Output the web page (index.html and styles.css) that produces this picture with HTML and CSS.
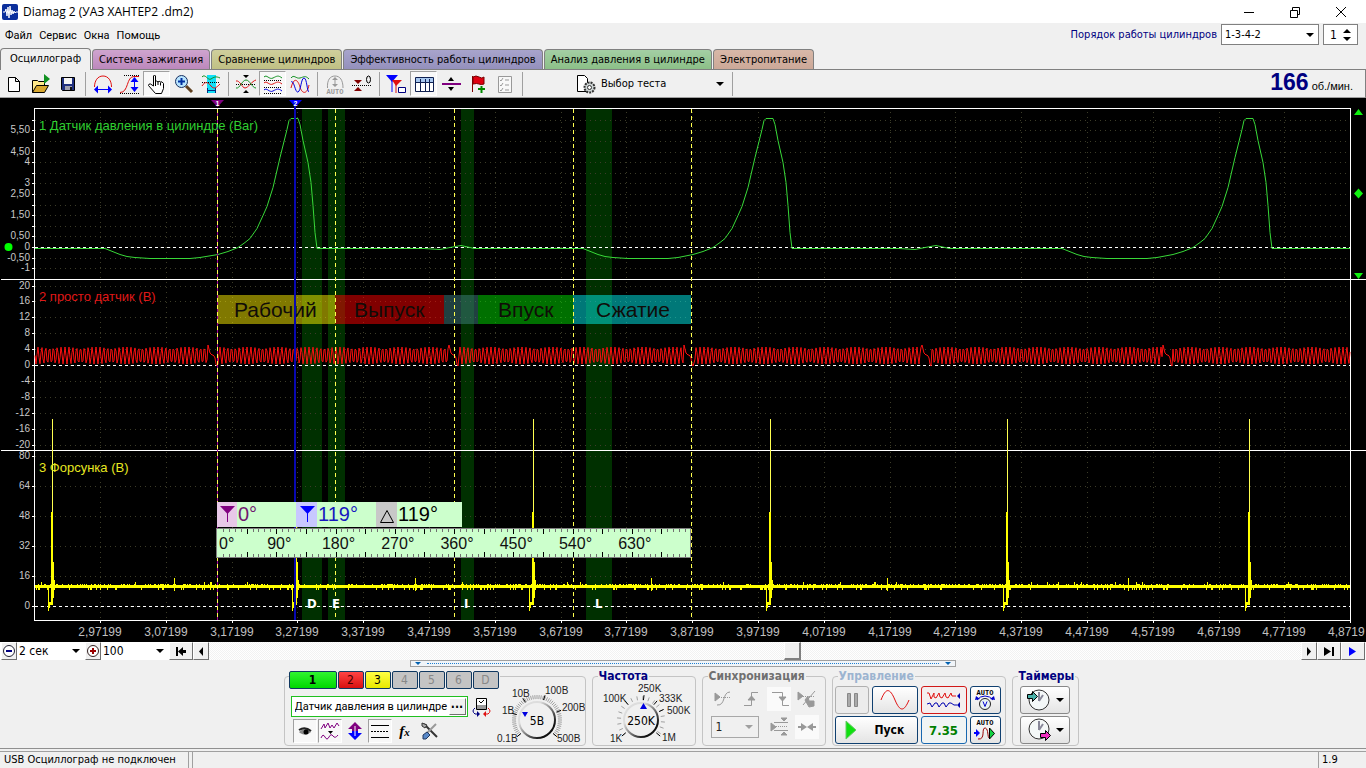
FILE: index.html
```html
<!DOCTYPE html>
<html lang="ru">
<head>
<meta charset="utf-8">
<title>Diamag 2 (УАЗ ХАНТЕР2 .dm2)</title>
<link rel="stylesheet" href="styles.css">
</head>
<body>
<header class="titlebar">
  <svg class="logo" width="16" height="16" viewBox="0 0 16 16"><rect width="16" height="16" rx="2" fill="#0b2f9c"/><path d="M1 8h2l1-3 1 7 1-9 1 11 1-12 1 9 1-5 1 4 1-3 1 2 1-1h2" fill="none" stroke="#fff"/></svg>
  <h1>Diamag 2 (УАЗ ХАНТЕР2 .dm2)</h1>
  <div class="window-buttons">
    <button aria-label="Свернуть"><svg width="12" height="12"><path d="M1 6.5h10" stroke="#000"/></svg></button>
    <button aria-label="Развернуть"><svg width="12" height="12" fill="none" stroke="#000"><path d="M1.5 4.500h7v7h-7zM3.500 4.500v-3h7v7h-2"/></svg></button>
    <button aria-label="Закрыть"><svg width="12" height="12"><path d="M1 1l10 10M11 1L1 11" stroke="#000"/></svg></button>
  </div>
</header>

<div class="menubar">
  <nav class="menu"><a href="#">Файл</a><a href="#">Сервис</a><a href="#">Окна</a><a href="#">Помощь</a></nav>
  <div class="order">
    <label for="order">Порядок работы цилиндров</label>
    <span class="combo order-combo"><select id="order"><option>1-3-4-2</option></select></span>
    <span class="spin"><input value="1" aria-label="Номер цилиндра"><svg width="10" height="14"><path d="M1 5h8L5 1zM1 9h8L5 13z"/></svg></span>
  </div>
</div>

<div class="tabs" role="tablist">
  <button role="tab" aria-selected="true" class="tab active">Осциллограф</button>
  <button role="tab" class="tab pink">Система зажигания</button>
  <button role="tab" class="tab olive">Сравнение цилиндров</button>
  <button role="tab" class="tab violet">Эффективность работы цилиндров</button>
  <button role="tab" class="tab green">Анализ давления в цилиндре</button>
  <button role="tab" class="tab peach">Электропитание</button>
</div>

<div class="toolbar">
  <button class="tool" aria-label="Новый"><svg width="22" height="22" viewBox="0 0 22 22"><path d="M5.500 4.500h7l4 4v10h-11zM12.500 4.500v4h4" fill="#fff" stroke="#000"/></svg></button>
  <button class="tool" aria-label="Открыть"><svg width="22" height="22" viewBox="0 0 22 22"><path d="M2.500 19.500v-12h5l1 1h6v4" fill="#ffe98a" stroke="#000"/><path d="M2.500 19.500l4-7h12l-4 7z" fill="#d8a830" stroke="#000"/><path d="M14 1l6 5-6 5z" fill="#109020"/></svg></button>
  <button class="tool" aria-label="Сохранить"><svg width="22" height="22" viewBox="0 0 22 22"><path d="M4.500 4.500h13v13h-12l-1-1z" fill="#203080" stroke="#000"/><path d="M7 5h8v6H7z" fill="#f4f4f4"/><path d="M8 13h7v4H8z" fill="#a0a0b0"/><path d="M13 14h2v3h-2z" fill="#111"/></svg></button>
  <i class="sep"></i>
  <button class="tool" aria-label="Масштаб по горизонтали"><svg width="22" height="22" viewBox="0 0 22 22" fill="none"><path d="M2.500 14c0-6 3-11 8.500-11s8.500 5 8.500 11" stroke="#e01010"/><path d="M5 16.500h12" stroke="#00f"/><path d="M2 16.500l4-4v8zM20 16.500l-4-4v8z" fill="#00f"/></svg></button>
  <button class="tool" aria-label="Масштаб по вертикали"><svg width="22" height="22" viewBox="0 0 22 22" fill="none"><path d="M1 19.500c9 0 6-16 14-16h5" stroke="#e01010"/><path d="M1 20.500h19M5 2.500h15" stroke="#000" stroke-dasharray="1 1"/><path d="M15.500 7v10" stroke="#00f"/><path d="M15.500 4l4 5h-8zM15.500 19l4-5h-8z" fill="#00f"/></svg></button>
  <button class="tool pressed" aria-label="Рука"><svg width="22" height="22" viewBox="0 0 22 22"><path d="M7.500 13V3q1-2 2 0v6q1-2 2.500 0 1-1.500 2.500 0 1.500-1 3 1.500v5l-2 5h-6l-7-8q0-2 2-1.500z" fill="#fff" stroke="#000"/><path d="M9.500 9v4M12 9v3M14.500 9.500v3" stroke="#000"/></svg></button>
  <button class="tool" aria-label="Лупа"><svg width="22" height="22" viewBox="0 0 22 22"><path d="M13 13l6 6" stroke="#604020" stroke-width="3"/><circle cx="8.500" cy="8.500" r="6" fill="#b8e4ff" stroke="#183060"/><path d="M5 8.500h7M8.500 5v7" stroke="#0030a0" stroke-width="2"/></svg></button>
  <button class="tool" aria-label="Фрагмент"><svg width="22" height="22" viewBox="0 0 22 22" fill="none"><path d="M7 2h9v18H7z" fill="#10e0f8"/><path d="M2 4c3-4 6 4 9 2s5-3 9-1" stroke="#109020"/><path d="M2 9.500h18" stroke="#000" stroke-dasharray="1 1"/><path d="M2 13c3-5 6-4 9 0s6 1 9-2" stroke="#e01010"/><path d="M8 17.500h7M7.500 15v5M15.500 15v5" stroke="#003080"/></svg></button>
  <i class="sep"></i>
  <button class="tool" aria-label="По центру"><svg width="22" height="22" viewBox="0 0 22 22" fill="none"><path d="M8 2h6l-3 3zM8 20h6l-3-3z" fill="#000"/><path d="M1 11.500h20" stroke="#000" stroke-dasharray="1 1"/><path d="M1 8c4-1 6 7 9 7s7-7 11-8" stroke="#e01010"/><path d="M1 15c4 1 6-8 10-8s6 8 10 8" stroke="#109020"/></svg></button>
  <button class="tool pressed" aria-label="Раздельно"><svg width="22" height="22" viewBox="0 0 22 22" fill="none"><path d="M2 4c3-3 5 3 9 1s5-3 9 0" stroke="#109020"/><path d="M2 10c3-3 5 3 9 1s5-3 9 0" stroke="#e01010"/><path d="M2 17c3-3 5 3 9 1s5-3 9 0" stroke="#0000e0"/><path d="M2 7.500h18M2 14.500h18M2 20.500h18" stroke="#000" stroke-dasharray="1 1"/></svg></button>
  <button class="tool" aria-label="Вместе"><svg width="22" height="22" viewBox="0 0 22 22" fill="none"><path d="M2 5c3-4 5 1 9 0s5-3 9 1" stroke="#109020"/><path d="M2 15C5 3 9 7 11 14s7 8 9-2" stroke="#e01010"/><path d="M2 9c3-3 4 11 7 10s3-14 6-14 3 14 5 14" stroke="#0000e0"/></svg></button>
  <i class="sep"></i>
  <button class="tool" disabled aria-label="Авто"><svg width="22" height="22" viewBox="0 0 22 22"><path d="M3.500 15C3 7 6 3 11 3s8 4 8 12M11 5v8" fill="none" stroke="#999"/><path d="M11 4l3 3H8zM11 14l3-3H8z" fill="#999"/><text class="auto-text" x="11" y="21" fill="#999">AUTO</text></svg></button>
  <button class="tool" aria-label="Ноль"><svg width="22" height="22" viewBox="0 0 22 22"><path d="M3 7h8l-4 4zM3 18h8l-4-4z" fill="#800000"/><path d="M1 12.500h20" stroke="#000" stroke-dasharray="1 1"/><ellipse cx="17.500" cy="6.500" rx="2" ry="3.500" fill="none" stroke="#000"/></svg></button>
  <i class="sep"></i>
  <button class="tool" aria-label="Маркеры"><svg width="22" height="22" viewBox="0 0 22 22"><path d="M6 6v13" stroke="#00f"/><path d="M0 2h12L6 9z" fill="#00f"/><path d="M10 8v12" stroke="#e01010"/><path d="M6 7h10l-6 6z" fill="#e01010"/><path d="M12.500 14.500h7v5h-7z" fill="#fff" stroke="#000080"/></svg></button>
  <button class="tool pressed" aria-label="Таблица"><svg width="22" height="22" viewBox="0 0 22 22"><path d="M2.500 4.500h18v14h-18z" fill="#fff" stroke="#102050"/><path d="M3 5h17v4H3z" fill="#a8c8f0"/><path d="M2 9.500h18M7.500 6v12M12.500 6v12M16.500 6v12" stroke="#102050"/></svg></button>
  <button class="tool" aria-label="Разделить"><svg width="22" height="22" viewBox="0 0 22 22"><path d="M2 11h19" stroke="#800080" stroke-width="2"/><path d="M8 8h6l-3-4zM8 14h6l-3 4z"/></svg></button>
  <button class="tool" aria-label="Флаг"><svg width="22" height="22" viewBox="0 0 22 22"><path d="M5.500 3v16" stroke="#800000"/><path d="M6 4q3-2 6 0t5 0v7q-3 1-5 0t-6 0z" fill="#e00010" stroke="#700"/><path d="M11 16h7M14.500 13v7" stroke="#008a00" stroke-width="2"/></svg></button>
  <button class="tool" disabled aria-label="Список"><svg width="22" height="22" viewBox="0 0 22 22"><path d="M4.500 3.500h13v16h-13z" fill="#f8f8f8" stroke="#999"/><path d="M6 7l1 1 2-3M6 12l1 1 2-3M6 17l1 1 2-3M11 7h4M11 12h4M11 17h4" fill="none" stroke="#999"/></svg></button>
  <i class="sep"></i>
  <button class="test-picker"><svg width="22" height="22" viewBox="0 0 22 22"><path d="M2.500 18.500v-16h7l3 3v13z" fill="#fff" stroke="#000"/><circle cx="14.500" cy="14.500" r="5" fill="#d0d8d8" stroke="#333" stroke-width="2" stroke-dasharray="2 1"/><circle cx="14.500" cy="14.500" r="2" fill="#fff" stroke="#333"/></svg><span>Выбор теста</span><i class="caret"></i></button>
  <i class="sep"></i>
  <div class="rpm"><b>166</b> об./мин.</div>
</div>

<main class="scope"><svg id="chart" viewBox="0 98 1366 544" role="img" aria-label="Осциллограмма"></svg></main>

<div class="scrollrow">
  <button class="flat3d round" aria-label="Уменьшить"><svg width="14" height="14"><circle cx="7" cy="7" r="5.500" fill="#fff" stroke="#223"/><path d="M4 7h6" stroke="#000080" stroke-width="2"/></svg></button>
  <span class="combo plain"><select aria-label="Развёртка"><option>2 сек</option></select></span>
  <button class="flat3d round" aria-label="Увеличить"><svg width="14" height="14"><circle cx="7" cy="7" r="5.500" fill="#fff" stroke="#322"/><path d="M4 7h6M7 4v6" stroke="#900" stroke-width="2"/></svg></button>
  <span class="combo plain"><select aria-label="Масштаб"><option>100</option></select></span>
  <button class="flat3d wide" aria-label="В начало"><svg width="12" height="9"><path d="M1 0h2v9H1zM3 4.500L8 0v9zM8 3h3v3H8z"/></svg></button>
  <button class="flat3d" aria-label="Назад"><svg width="6" height="9"><path d="M1 4.500L5 0v9z"/></svg></button>
  <div class="track"><div class="thumb"></div></div>
  <button class="flat3d" aria-label="Вперёд"><svg width="6" height="9"><path d="M5 4.500L1 0v9z"/></svg></button>
  <button class="flat3d wide" aria-label="В конец"><svg width="12" height="9"><path d="M1 0l7 4.500L1 9zM9 0h2v9H9z"/></svg></button>
  <button class="flat3d wide" aria-label="Воспроизвести"><svg width="10" height="9"><path d="M1 0l7 4.500L1 9z" fill="#00f"/></svg></button>
</div>

<div class="splitter"><i></i><b></b><i></i></div>

<div class="panel">
  <fieldset class="group channel">
    <div class="channel-main">
      <div class="channels">
        <button class="ch c1">1</button><button class="ch c2">2</button><button class="ch c3">3</button><button class="ch" disabled>4</button><button class="ch" disabled>5</button><button class="ch" disabled>6</button><button class="ch" disabled>D</button>
      </div>
      <div class="sensor">
        <div class="sensor-box"><input value="Датчик давления в цилиндре" aria-label="Датчик"><button class="flat3d" aria-label="Выбрать датчик">...</button></div>
        <button class="icon small" aria-label="Подключение"><svg width="20" height="20" viewBox="0 0 20 20"><path d="M5.500 1.500h10v11h-10z" fill="#fff" stroke="#000"/><path d="M6 8h9v4H6z" fill="#999"/><path d="M8 4l2 2 3-3" fill="none" stroke="#000"/><path d="M4 11q-4 3 0 6h3" fill="none" stroke="#000080"/><path d="M6 14l3 3-3 3z" fill="#000080"/><path d="M17 11q4 3 0 6h-3" fill="none" stroke="#e01010"/><path d="M15 14l-3 3 3 3z" fill="#e01010"/></svg></button>
      </div>
      <div class="iconrow">
        <button class="icon pressed" aria-label="Видимость"><svg width="20" height="20" viewBox="0 0 20 20"><path d="M4 11q6-6 12 0-5 5-11 1z" fill="#888"/><path d="M4 9q6-4 12 1" fill="none" stroke="#222" stroke-width="2"/><circle cx="11" cy="11" r="2.500"/></svg></button>
        <button class="icon pressed" aria-label="Фильтр"><svg width="20" height="20" viewBox="0 0 20 20"><path d="M1 8l3-5 1 4 3-5 2 5 2-3 2 3 3-5 2 3" fill="none" stroke="#800080"/><path d="M8 10h5l-2.500 3z"/><path d="M1 17q2-5 4-1t4 0 4-1 5-1" fill="none" stroke="#800080"/></svg></button>
        <button class="icon" aria-label="Инверсия"><svg width="20" height="20" viewBox="0 0 20 20"><path d="M10 1l7 7h-4v2H7V8H3z" fill="#800080"/><path d="M10 19l7-7h-4v-2H7v2H3z" fill="#00f"/><path d="M10 5v10" stroke="#fff"/></svg></button>
        <button class="icon pressed" aria-label="Уровни"><svg width="20" height="20" viewBox="0 0 20 20" stroke="#000"><path d="M1 4.500h18M1 16.500h18"/><path d="M1 10.500h18" stroke-dasharray="2 1"/></svg></button>
        <button class="icon fx" aria-label="Функция"><i>f<small>x</small></i></button>
        <button class="icon" aria-label="Настройки"><svg width="20" height="20" viewBox="0 0 20 20"><path d="M4 3l13 13" stroke="#333" stroke-width="2"/><path d="M16 3L6 13" stroke="#999" stroke-width="2"/><path d="M7 11l-4 3v4h3l4-4z" fill="#5888c8" stroke="#203860"/><path d="M2 2v3l3 2 2-3z" fill="#aaa" stroke="#333"/></svg></button>
      </div>
    </div>
    <svg class="knob" id="volt" width="88" height="69" viewBox="497 677 88 69"></svg>
  </fieldset>

  <fieldset class="group freq"><legend>Частота</legend>
    <svg class="knob" id="freq" width="100" height="69" viewBox="593 677 100 69"></svg>
  </fieldset>

  <fieldset class="group sync" disabled><legend>Синхронизация</legend>
    <button class="icon" aria-label="По уровню"><svg width="22" height="22" viewBox="0 0 22 22" fill="none" stroke="#999"><path d="M3 5v8l5-4z" fill="#999"/><path d="M3 9.500h16" stroke-dasharray="1 1"/><path d="M5 17c9 1 5-13 13-13"/></svg></button>
    <button class="icon" aria-label="Фронт"><svg width="22" height="22" viewBox="0 0 22 22" fill="none" stroke="#999"><path d="M4 17.500h7.500v-13H18"/><path d="M8 12h7l-3.500-4z" fill="#999"/></svg></button>
    <button class="icon lit" aria-label="Спад"><svg width="22" height="22" viewBox="0 0 22 22" fill="none" stroke="#999"><path d="M4 4.500h10.500v13H21"/><path d="M11 9h7l-3.500 4z" fill="#999"/></svg></button>
    <button class="icon" aria-label="Вручную"><svg width="22" height="22" viewBox="0 0 22 22" fill="none" stroke="#999"><path d="M2 4v8l5-4zM9 12l3-4 1 5h5v5l-5 1z" fill="#999"/><path d="M3 8.500h15" stroke-dasharray="1 1"/><path d="M7 17L19 3"/></svg></button>
    <span class="combo sync-combo"><select aria-label="Канал"><option>1</option></select></span>
    <button class="icon" aria-label="Зона"><svg width="22" height="22" viewBox="0 0 22 22" fill="none" stroke="#999"><path d="M3 7v8l5-4zM13 2h6l-3 3zM13 19h6l-3-3z" fill="#999"/><path d="M6 6.500h14M6 14.500h14"/><path d="M6 10.500h14" stroke-dasharray="1 1"/></svg></button>
    <button class="icon lit" aria-label="Сжать"><svg width="22" height="22" viewBox="0 0 22 22" fill="#999"><path d="M2 10h3V7l6 4-6 4v-3H2zM20 10h-3V7l-6 4 6 4v-3h3z"/></svg></button>
  </fieldset>

  <fieldset class="group control"><legend>Управление</legend>
    <button class="ctl off" disabled aria-label="Пауза"><svg width="16" height="18"><path d="M3.500 2.500h3v13h-3zM10.500 2.500h3v13h-3z" fill="#aaa" stroke="#888"/></svg></button>
    <button class="ctl" aria-label="Одиночный"><svg width="32" height="22"><path d="M2 11C7-2 11-1 16 11s9 12 14 0" fill="none" stroke="#e01010"/></svg></button>
    <button class="ctl red" aria-label="Непрерывный"><svg width="36" height="22" fill="none"><path d="M1 4h2l2 6 3-6v4l2 1 3-5 1 4 2 1 3-5 1 4 2 1 3-5 1 3h4" stroke="#e01010"/><path d="M1 15l3-1 2 4 3-4 2 0 2 4 3-4 2 0 2 4 3-4 2 0 3 2h3" stroke="#0000b0"/><path d="M34 4v6l-3-3zM34 13v6l-3-3z" fill="#0000b0"/></svg></button>
    <button class="ctl" aria-label="Автонастройка"><svg width="24" height="24" viewBox="0 0 24 24"><text class="auto-text" x="12" y="7">AUTO</text><circle cx="12" cy="16" r="5.500" fill="#e8f4f4" stroke="#222"/><path d="M10 13.500l2 5 2-5M4 12q3-4 8-4t8 4" fill="none" stroke="#00c"/><path d="M2 12l1-4 4 3zM22 12l-1-4-4 3z" fill="#00c"/></svg></button>
    <button class="ctl start"><svg width="12" height="20"><path d="M1 1l10 9L1 19z" fill="#10e010" stroke="#6c6"/></svg>Пуск</button>
    <button class="ctl blue">7.35</button>
    <button class="ctl" aria-label="Автопуск"><svg width="24" height="24" viewBox="0 0 24 24"><text class="auto-text" x="12" y="7">AUTO</text><path d="M5 21c8 1 3-11 7-11s2 12 5 10" fill="none" stroke="#900"/><path d="M1 14h2v-3l4 4-4 4v-3H1z" fill="#00f"/><path d="M16.500 10l5 5.500-5 5.500z" fill="#10d040" stroke="#000"/></svg></button>
  </fieldset>

  <fieldset class="group timers"><legend>Таймеры</legend>
    <button class="ctl gray" aria-label="Таймер начала"><svg width="26" height="24" viewBox="0 0 26 24"><circle cx="14" cy="12" r="10" fill="#f4f8f8" stroke="#333"/><path d="M14 13V4M14 13l4-6" stroke="#889" stroke-width="2"/><path d="M2.500 6.500h5v-3l5 5-5 5v-3h-5z" fill="#48b0a8" stroke="#000"/></svg><i class="caret"></i></button>
    <button class="ctl gray" aria-label="Таймер конца"><svg width="26" height="24" viewBox="0 0 26 24"><circle cx="14" cy="11" r="10" fill="#f4f8f8" stroke="#333"/><path d="M14 12V3M14 12l4-6" stroke="#889" stroke-width="2"/><path d="M15.500 15.500h5v-3l5 5-5 5v-3h-5z" fill="#f030c0" stroke="#000"/></svg><i class="caret"></i></button>
  </fieldset>
</div>

<footer class="status"><span>USB Осциллограф не подключен</span><span class="version">1.9</span></footer>
<div class="edge"><i></i><i></i></div>
<script src="script.js"></script>
</body>
</html>
```
FILE: styles.css
```css
* { box-sizing: border-box; }
body {
  margin: 0;
  min-height: 100vh;
  display: flex;
  flex-direction: column;
  background: #f0f0f0;
  color: #000;
  font: 12px/14px "DejaVu Sans Condensed", "Noto Sans", sans-serif;
  overflow-x: hidden;
}
button, input, select { font: inherit; color: inherit; margin: 0; padding: 0; border-radius: 0; }
button { background: none; border: 0; display: flex; align-items: center; justify-content: center; }
svg { display: block; flex: none; }
a { color: inherit; text-decoration: none; }

.titlebar { display: flex; align-items: center; height: 23px; background: #fff; padding: 0 2px; }
.titlebar h1 { margin: 0 auto 0 5px; font: 12px/20px "Open Sans", "Noto Sans", sans-serif; }
.window-buttons { display: flex; }
.window-buttons button { width: 46px; height: 20px; }

.menubar { display: flex; justify-content: space-between; height: 25px; padding: 0 8px 0 5px; }
.menu { display: flex; gap: 7px; font: 11px/26px Roboto, sans-serif; }
.order { display: flex; align-items: flex-start; padding-top: 1px; gap: 4px; color: #000080; }
.order label { line-height: 22px; font-size: 11px; }
.combo { position: relative; display: flex; color: #000; }
.combo select { appearance: none; width: 100%; border: 1px solid #808080; background: #fff; padding: 0 3px; }
.combo::after {
  content: "";
  position: absolute;
  right: 5px;
  top: 50%;
  margin-top: -2px;
  border: 4px solid transparent;
  border-top-color: #000;
  border-bottom: 0;
  pointer-events: none;
}
.order-combo { width: 98px; height: 21px; font-size: 11px; }
.spin { display: flex; align-items: center; width: 35px; height: 21px; border: 1px solid #808080; background: #fff; color: #000; padding-right: 5px; }
.spin input { flex: 1; min-width: 0; border: 0; padding-left: 6px; background: none; }

.tabs { display: flex; align-items: flex-end; height: 22px; gap: 1px; border-bottom: 1px solid #808080; }
.tab { height: 20px; padding: 0 6px; border: 1px solid #808080; border-bottom: 0; border-radius: 4px 4px 0 0; font-size: 11px; white-space: nowrap; }
.tab.active { height: 22px; margin-bottom: -1px; background: #f0f0f0; padding: 0 9px 1px; }
.pink { background: linear-gradient(#cfa4cf, #bc88bc); }
.olive { background: linear-gradient(#cfcf9c, #c0c084); }
.violet { background: linear-gradient(#a8a4cc, #9490bc); }
.green { background: linear-gradient(#a4cfa4, #8cc088); }
.peach { background: linear-gradient(#d8b8a8, #cca898); }

.toolbar { display: flex; align-items: center; height: 28px; padding: 0 12px 0 0; border-right: 1px solid #808080; border-bottom: 1px solid #a0a0a0; }
.tool { width: 27px; height: 25px; }
.pressed { background: #f8f8f8; border: 1px solid #fff; border-top-color: #a0a0a0; border-left-color: #a0a0a0; }
.sep { flex: none; width: 8px; height: 24px; background: linear-gradient(#a0a0a0, #a0a0a0) 4px 0 / 1px 100% no-repeat; }
.test-picker { width: 202px; height: 24px; padding: 0 4px 0 49px; justify-content: flex-start; gap: 4px; font-size: 11px; }
.caret { border: 4px solid transparent; border-top-color: #000; border-bottom: 0; }
.test-picker .caret { margin-left: auto; }
.rpm { margin-left: auto; display: flex; align-items: baseline; gap: 3px; font: 11px/26px "Liberation Sans", sans-serif; }
.rpm b { color: #000080; font-size: 23px; }
.auto-text { font: bold 7px "Liberation Mono", monospace; text-anchor: middle; }

.scope { background: #000; }
.scope svg { width: 100%; height: auto; font-family: "Liberation Sans", sans-serif; }

.scrollrow { display: flex; height: 18px; padding: 0 1px; background: #fff; }
.flat3d { width: 16px; background: #f0f0f0; border: 1px solid #fff; border-right-color: #707070; border-bottom-color: #707070; }
.flat3d.wide { width: 24px; }
.plain { width: 68px; padding-left: 0; }
.plain select { border: 0; padding: 0 2px; }
.track { flex: 1; display: flex; background: repeating-conic-gradient(#f2f2f2 0 25%, #fff 0 50%) 0 0 / 2px 2px; }
.thumb { width: 17px; margin-left: 52.7%; background: #f0f0f0; border: 1px solid #fff; border-right: 2px solid #808080; border-bottom: 2px solid #808080; }

.splitter { align-self: center; display: flex; align-items: center; gap: 6px; width: 40%; height: 7px; padding: 0 4px; border: 1px solid #a0a0a0; background: #f0f4f8; }
.splitter i { border: 3px solid transparent; border-top-color: #0060b0; border-bottom: 0; }
.splitter b { flex: 1; border-top: 1px dotted #2080d0; }

.panel { display: flex; justify-content: center; gap: 6px; padding: 9px 4px 2px 0; border-bottom: 1px solid #909090; }
.group { position: relative; display: flex; min-width: 0; margin: 0; padding: 0; height: 70px; border: 1px solid #c4c4c4; border-radius: 4px; }
.group legend { position: absolute; top: -7px; left: 5px; padding: 0 1px; background: #f0f0f0; color: #000080; font: bold 12px/13px "DejaVu Sans Condensed", sans-serif; }
.channel { width: 302px; padding-left: 4px; }
.channel-main { width: 208px; }
.channels { display: flex; gap: 1px; width: 211px; margin-top: -6px; position: relative; background: #f0f0f0; }
.ch { width: 26px; height: 18px; border: 1px solid #103860; background: #c4c4c4; color: #888; border-radius: 2px; }
.c1 { width: 48px; background: linear-gradient(#30f430, #00d800); color: #000; font-weight: bold; }
.c2 { background: linear-gradient(#f44, #d81010); color: #400; }
.c3 { background: linear-gradient(#ff4, #e8e800); color: #000; }
.sensor { display: flex; gap: 3px; margin: 7px 0 1px 2px; }
.sensor-box { display: flex; width: 177px; height: 21px; border: 1px solid #20c020; background: #fff; padding: 1px; }
.sensor-box input { flex: 1; min-width: 0; border: 0; padding: 0 0 0 2px; background: none; font: 11px Roboto, sans-serif; }
.sensor-box .flat3d { width: 17px; align-items: flex-start; font-weight: bold; line-height: 11px; }
.icon { width: 24px; height: 24px; }
.icon.small { width: 20px; height: 22px; }
.iconrow { display: flex; gap: 1px; padding-left: 4px; }
.fx { font: bold 15px/16px "Liberation Serif", serif; }
.fx small { font-size: 11px; }
.knob { font: 10px "Liberation Sans", sans-serif; }
.freq { width: 104px; }
.sync { width: 124px; display: grid; grid-template-columns: repeat(4, 24px); column-gap: 4px; row-gap: 4px; padding: 10px 0 0 8px; align-content: start; color: #666; }
.sync legend { color: #707070; }
.lit { background: #fafafa; }
.sync-combo { grid-column: span 2; width: 48px; height: 22px; margin-top: 1px; }
.sync-combo select { background: #f0f0f0; opacity: 1; color: #222; border-color: #a8a8a8; padding: 0 4px; }
.sync-combo::after { border-top-color: #a0a0a0; right: 6px; }
.control { width: 174px; display: grid; grid-template: 28px 28px / 34px 46px 46px 31px; gap: 2px 3px; padding: 9px 0 0 2px; align-content: start; }
.control legend { color: #9cb4d0; }
.ctl { border: 1px solid #104070; border-radius: 3px; background: linear-gradient(#fff, #e4e4e4); }
.ctl.off { border-color: #b0b0b0; background: #ececec; }
.ctl.red { border-color: #d01818; background: #f4eeee; }
.ctl.blue { border-color: #1868b0; color: #008000; font: bold 13px "DejaVu Sans Condensed", sans-serif; background: #f0f4f4; }
.start { grid-column: span 2; justify-content: flex-start; padding-left: 9px; gap: 18px; font-weight: bold; }
.timers { width: 67px; flex-direction: column; gap: 2px; padding: 9px 0 0 7px; }
.ctl.gray { width: 50px; height: 28px; border-color: #888; gap: 5px; }

.status { display: flex; flex: 1; min-height: 17px; margin-top: 2px; border-top: 1px solid #a0a0a0; line-height: 16px; font-size: 11px; }
.status span { width: 193px; padding-left: 4px; border-right: 1px solid #a0a0a0; box-shadow: inset -3px 0 #f0f0f0, inset -4px 0 #a0a0a0; }
.status .version { width: 48px; margin-left: auto; padding-left: 3px; border-right: 0; border-left: 1px solid #a0a0a0; box-shadow: none; }
.edge { display: flex; gap: 9px; height: 2px; background: #333; padding-left: 301px; }
.edge i { width: 25px; background: #406840; }
.edge i + i { width: 36px; background: #585858; }
```
FILE: script.js
```js
const NS = "http://www.w3.org/2000/svg";
function add(svg, tag, attrs, text) {
  const el = document.createElementNS(NS, tag);
  for (const k in attrs) el.setAttribute(k, attrs[k]);
  if (text !== undefined) el.textContent = text;
  svg.appendChild(el);
  return el;
}
const chart = document.getElementById("chart");
const line = (d, stroke, extra) => add(chart, "path", Object.assign({ d, stroke, fill: "none", "shape-rendering": "crispEdges" }, extra));
const rect = (x, y, width, height, fill, extra) => add(chart, "rect", Object.assign({ x, y, width, height, fill }, extra));
const text = (x, y, s, size, fill, extra) => add(chart, "text", Object.assign({ x, y, fill, "font-size": size }, extra), s);

// injector window bands
[[302, 20], [328, 17], [461, 13], [586, 26]].forEach(([x, w]) => rect(x, 109, w, 511, "#003000"));

// grid and scales
const scales = [
  { zero: 247, step: 10.6, from: -2, to: 12, label: i => ({ 11: "5,50", 9: "4,50", 8: "4", 6: "3", 5: "2,50", 3: "1,50", 1: "0,50", 0: "0", "-1": "-0,50", "-2": "-1" })[i] },
  { zero: 365, step: 15.9, from: -5, to: 5, label: i => String(i * 4) },
  { zero: 606, step: 30, from: 0, to: 5, label: i => String(i * 16) }
];
scales.forEach(s => {
  for (let i = s.from; i <= s.to; i++) {
    const y = Math.round(s.zero - i * s.step);
    line(`M35 ${y + .5}H1350`, "#3c3c28", { "stroke-dasharray": "1 4" });
    line(`M32 ${y + .5}h3`, "#fff");
    const t = s.label(i);
    if (t) text(30, y + 3, t, 10, "#c8c8c8", { "text-anchor": "end" });
  }
});
for (let i = 0; i < 20; i++) {
  const x = Math.round(100 + i * 65.8);
  line(`M${x + .5} 112V620`, "#3c3c28", { "stroke-dasharray": "1 4" });
  line(`M${x + .5} 620v3`, "#fff");
  // the last mark sits at the frame edge, so its label drops the final digits
  if (i === 19) text(1328, 636, "4,8719", 12, "#c0c0c0");
  else text(x, 636, (2.97199 + i * .1).toFixed(5).replace(".", ","), 12, "#c0c0c0", { "text-anchor": "middle" });
}
line("M34.5 620.5V108.500H1350.500V620.500z", "#fff");
line("M1 279.500H1366M1 450.500H1366", "#fff");
line("M35 247.500H1350M35 365.500H1350M35 606.500H1350", "#fff", { "stroke-dasharray": "3 3" });

// cylinder pressure
const dip = [[105, 248], [110, 250], [120, 254], [127, 256], [135, 257], [150, 258], [190, 258], [200, 257]];
const rise = [[218, 254], [228, 251], [238, 247], [245, 242], [250, 238], [257, 228], [263, 215], [267, 206], [273, 187], [280, 157], [287, 129], [289, 120], [291, 118], [298, 118], [300, 124], [303, 140], [308, 162], [311, 182], [313, 205], [315, 232], [317, 248]];
let p = [[35, 248]];
[[0, 0], [478, 475], [957, 955]].forEach(([a, b], i) => {
  p.push(...dip.map(([x, y]) => [x + a, y]), ...rise.map(([x, y]) => [x + b, y]));
  if (i < 2) p.push([424 + b, 248], [440 + b, 249], [450 + b, 247], [461 + b, 245], [470 + b, 247], [474 + b, 248]);
});
p.push([1350, 248]);
line("M" + p.map(q => q.join(" ")).join("L"), "#38d838", { "shape-rendering": "auto", transform: "translate(0 .5)" });

// crank sensor
const gaps = [208, 449, 684, 922, 1163];
p = [];
for (let x = 35; x <= 1350; x++) {
  const g = gaps.find(v => x >= v && x < v + 10);
  let y = 355.500 + 8.500 * Math.sin((x - 35) * 2 * Math.PI / 3.95 * 1.02);
  if (g) y = [345, 349, 353, 354, 355, 355, 356, 358, 364, 366][x - g];
  p.push(x + " " + y.toFixed(1));
}
line("M" + p.join("L"), "#ff1010", { "shape-rendering": "auto" });

// injector
let seed = 7;
const rnd = () => (seed = (seed * 1103515245 + 12345) % 2147483648) / 2147483648;
let noise = "";
for (let x = 35; x < 1350; x++) {
  const r = rnd();
  const up = r > .985 ? 5 : r > .7 ? 3 : 2;
  noise += `M${x + .5} ${587 - up}V${rnd() > .85 ? 590 : 588}`;
}
[174, 415, 651, 887, 1128].forEach(x => noise += `M${x + .5} 578V591`);
line(noise, "#ff0");
[52, 296, 533, 770, 1007, 1249].forEach(x => {
  line(`M${x + .5} ${x === 296 ? 512 : 419}V600`, "#ffff50");
  line(`M${x - 3.5} 587V611M${x - 3} 604.500h4M${x - 2.5} 608V602M${x - 1.5} 605V602M${x + 1.5} 562V598M${x + 2.5} 580V590`, "#ff0");
  line(`M${x} 512V604`, "#ff0", { "stroke-width": 2 });
});

// stroke phases
[[218, 117, "#ffef00"], [335, 109, "#f00"], [444, 34, "#408080"], [478, 95, "#00e000"], [573, 118, "#00f0f0"]]
  .forEach(([x, w, c]) => rect(x, 295, w, 29, c, { opacity: .5 }));
[[234, "Рабочий"], [354, "Выпуск"], [498, "Впуск"], [596, "Сжатие"]].forEach(([x, s]) => text(x, 317, s, 21, "#100c08"));

// cursors
line("M217.500 109V620", "#a000a0");
line("M217.500 109V620M335.500 109V620M454.500 109V620M573.500 109V620M691.500 109V620", "#ffff50", { "stroke-dasharray": "4 3" });
line("M295 106V620", "#0808b0", { "stroke-width": 2 });
add(chart, "path", { d: "M211 100h13l-6.500 7z", fill: "#800080" });
add(chart, "path", { d: "M289 100h13l-6.500 7z", fill: "#00f" });
text(217.500, 106, "1", 7, "#fff", { "text-anchor": "middle", "font-weight": "bold" });
text(295.500, 106, "2", 7, "#fff", { "text-anchor": "middle", "font-weight": "bold" });
add(chart, "circle", { cx: 8.500, cy: 247, r: 4, fill: "#0f0" });
add(chart, "path", { d: "M1354 115h9l-4.500-6zM1354 193.500l4.500-5 4.500 5-4.500 5zM1354 273h9l-4.500 6z", fill: "#10f010" });

text(39, 130, "1 Датчик давления в цилиндре (Bar)", 13, "#30d030");
text(39, 301, "2 просто датчик (В)", 13, "#e01818");
text(39, 472, "3 Форсунка (В)", 13, "#e8e820");
[[307, "D"], [332, "E"], [464, "I"], [595, "L"]].forEach(([x, s]) => text(x, 608, s, 13, "#fff", { "font-weight": "bold", "font-family": "DejaVu Sans Condensed, sans-serif" }));

// cursor readout
rect(217, 502, 245, 25, "#cfc");
rect(217, 502, 20, 25, "#e8c8e8");
rect(296, 502, 21, 25, "#c8c8ff");
rect(376, 502, 21, 25, "#c8c8c8");
line("M227.500 508V522", "#800080");
line("M307.500 508V522", "#00f");
add(chart, "path", { d: "M220 506h15l-7.500 8z", fill: "#800080" });
add(chart, "path", { d: "M300 506h15l-7.500 8z", fill: "#00f" });
add(chart, "path", { d: "M380.500 522.500h13l-6.500-12z", fill: "none", stroke: "#000" });
text(238, 521, "0°", 20, "#701870");
text(318, 521, "119°", 20, "#1818c0");
text(398, 521, "119°", 20, "#000");

// degree ruler
rect(216.500, 528.500, 474, 29, "#cfc", { stroke: "#808080" });
for (let i = 1; i < 80; i++) {
  const x = Math.round(217 + i * 5.925) + .5;
  const h = i % 5 ? 3 : 5;
  line(`M${x} 529v${h}M${x} 557v${-h}`, i % 5 ? "#707070" : "#000");
}
for (let i = 0; i < 8; i++) text(i ? 220 + i * 59.25 : 219, 549, i * 90 + "°", 16, "#101010", i ? { "text-anchor": "middle" } : {});

// rotary knobs
function knob(id, cx, cy, r, value, pointer, marks, labels) {
  const svg = document.getElementById(id);
  const ray = (a, r1, r2, stroke) => {
    const c = Math.cos(a * Math.PI / 180), s = Math.sin(a * Math.PI / 180);
    add(svg, "path", { d: `M${cx + r1 * c} ${cy + r1 * s}L${cx + r2 * c} ${cy + r2 * s}`, stroke });
  };
  const grad = add(svg, "linearGradient", { id: id + "-rim", x1: 0, y1: 0, x2: 1, y2: 1 });
  add(grad, "stop", { offset: .3, "stop-color": "#ddd" });
  add(grad, "stop", { offset: .8, "stop-color": "#111" });
  for (let a = 140; a <= 400; a += id === "volt" ? 5 : 15) ray(a, r + 2, r + 6, "#a0a0a0");
  marks.forEach(a => ray(a, r + 2, r + 7, "#000"));
  add(svg, "circle", { cx, cy, r: r - 1, fill: "#f0f0f0", stroke: `url(#${id}-rim)`, "stroke-width": 2 });
  add(svg, "path", { d: pointer, fill: "#0000e0" });
  add(svg, "text", { x: cx, y: cy + 5, "text-anchor": "middle", "font-size": 12, "font-family": "DejaVu Sans Condensed, sans-serif" }, value);
  labels.forEach(([x, y, s]) => add(svg, "text", { x, y, fill: "#222" }, s));
}
knob("volt", 537, 720, 19, "5В", "M522 712h6l-3 5z", [140, 195, 237, 288, 338, 400],
  [[512, 697, "10В"], [545, 694, "100В"], [502, 714, "1В"], [562, 711, "200В"], [497, 742, "0.1В"], [557, 742, "500В"]]);
knob("freq", 641, 720, 18, "250K", "M640 709h7l-3.500-6z", [140, 230, 277, 310, 335, 400],
  [[638, 692, "250K"], [603, 702, "100K"], [659, 702, "333K"], [667, 714, "500K"], [610, 742, "1K"], [662, 741, "1M"]]);
```
